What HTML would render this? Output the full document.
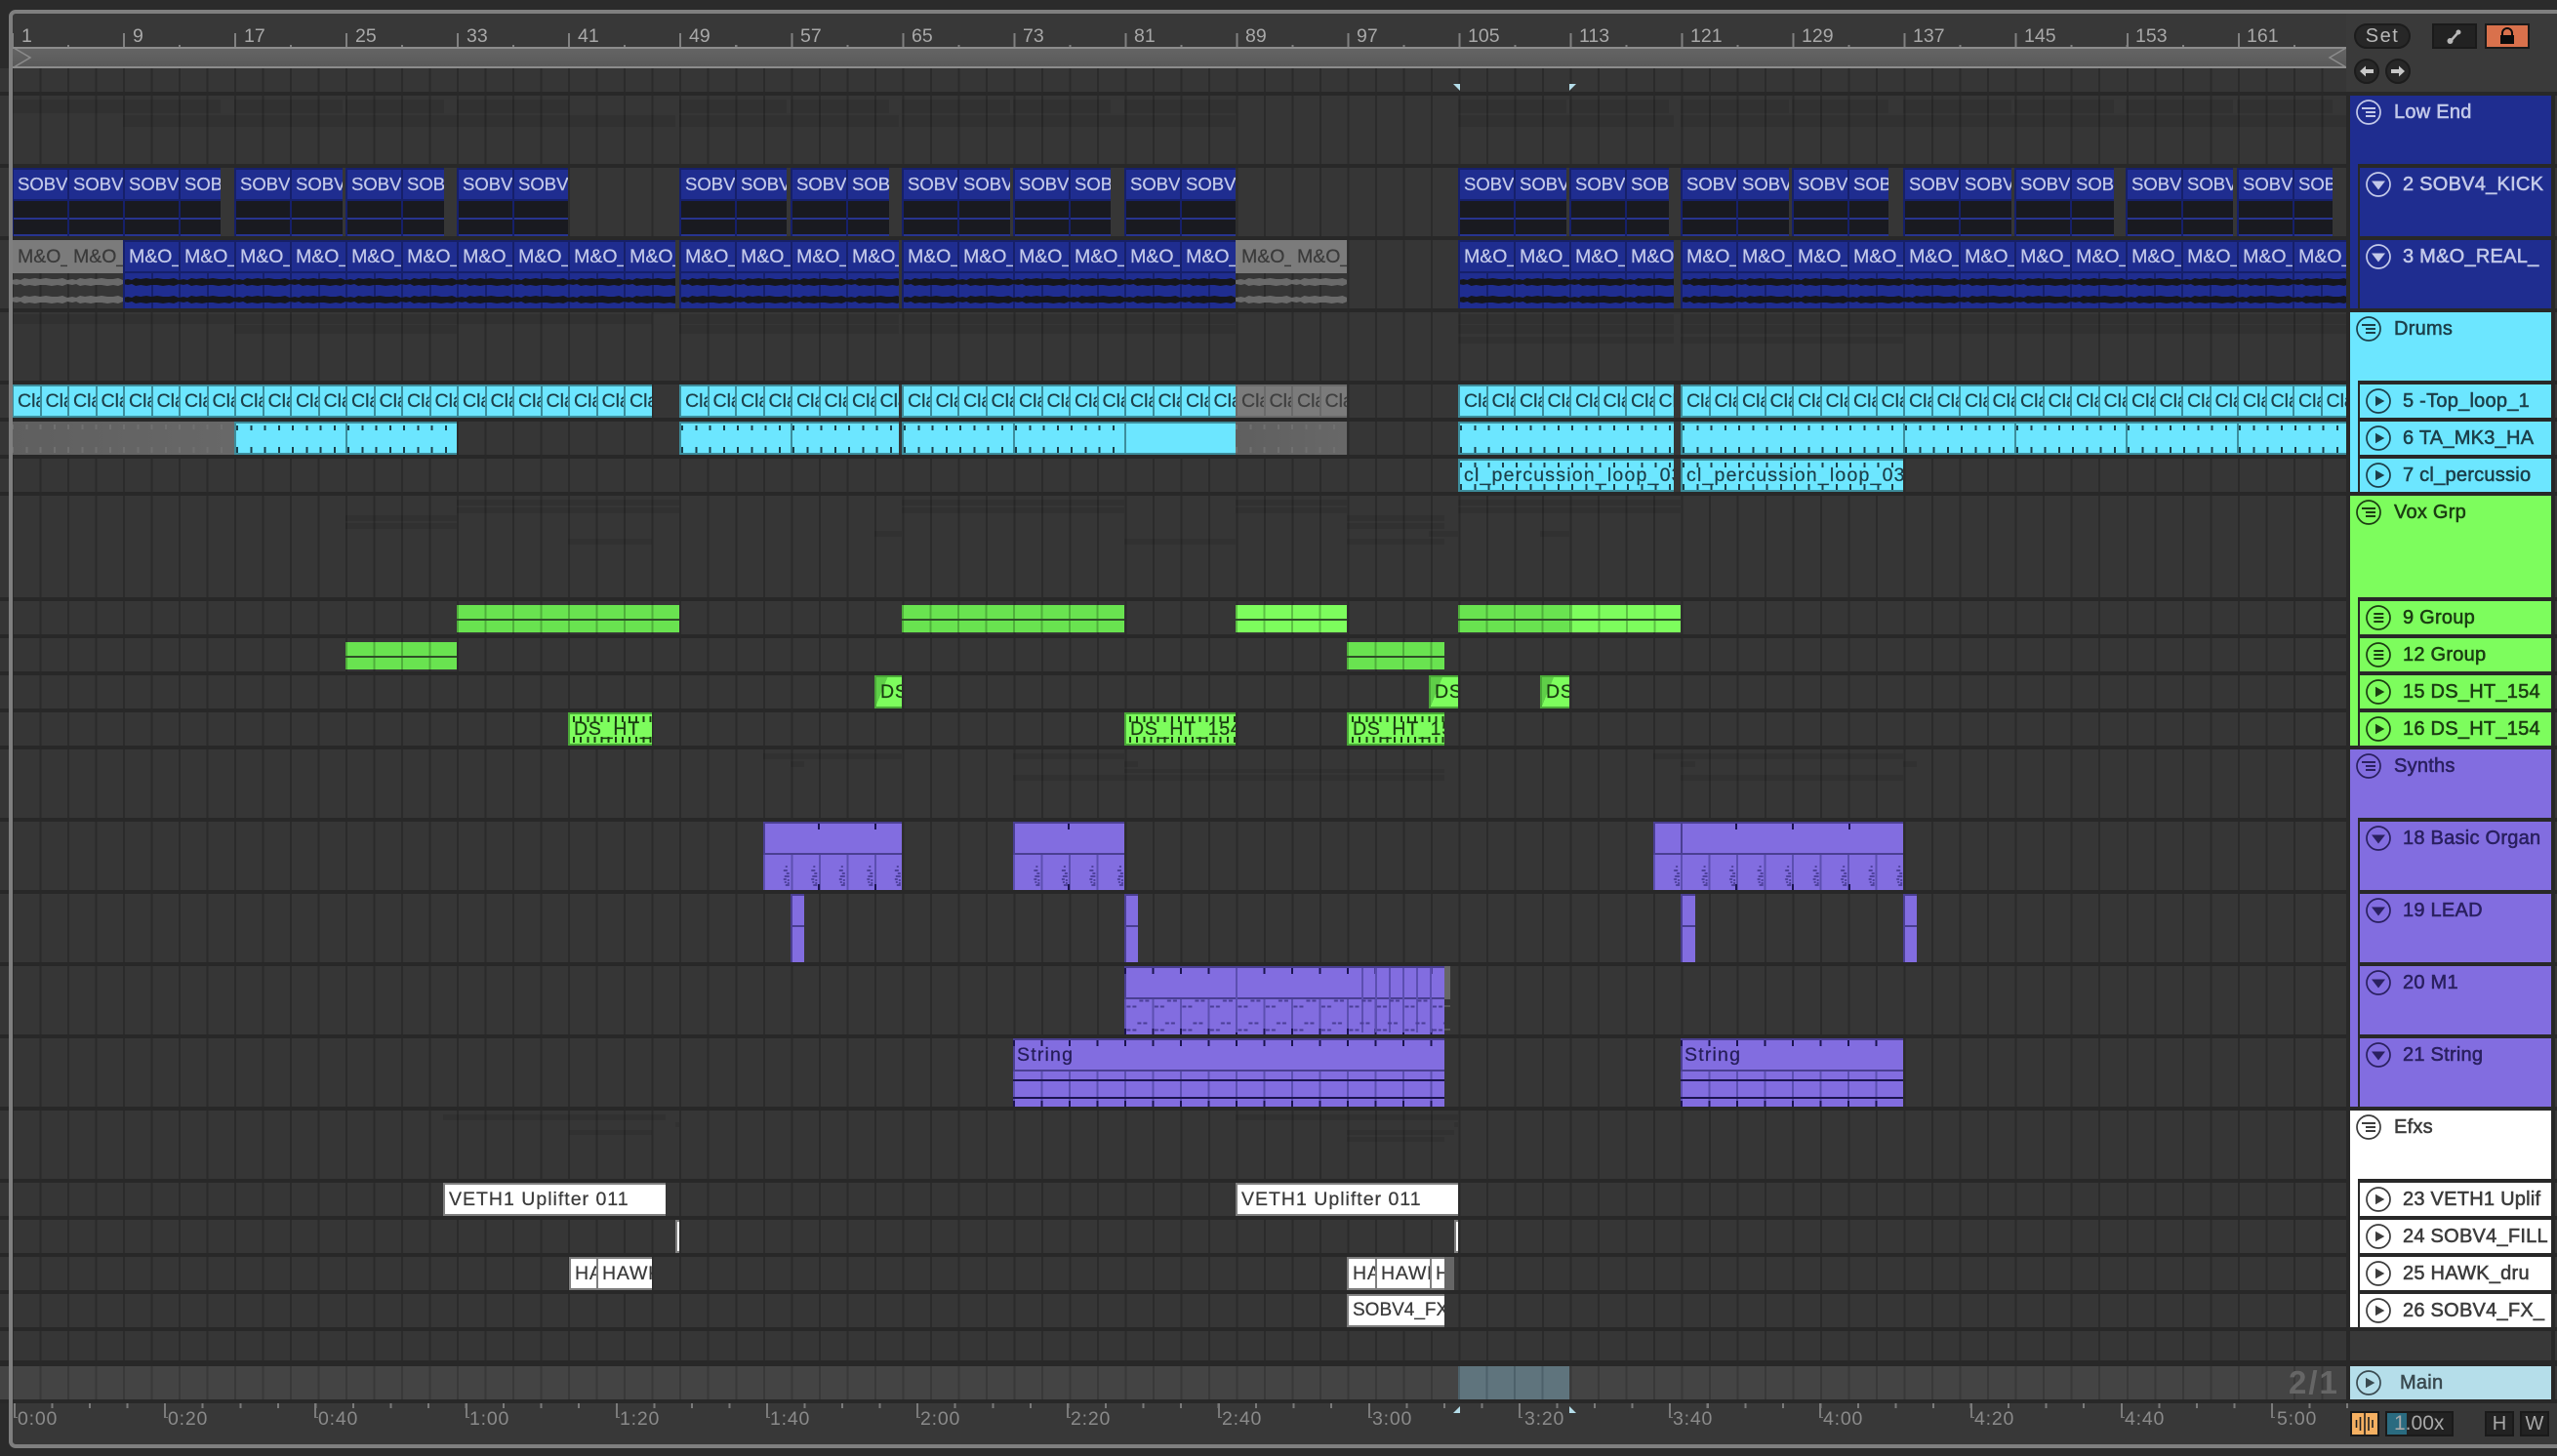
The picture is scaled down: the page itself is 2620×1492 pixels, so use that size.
<!DOCTYPE html>
<html><head><meta charset="utf-8"><title>Arrangement</title>
<style>
*{box-sizing:border-box}
html,body{margin:0;padding:0;width:2620px;height:1492px;overflow:hidden;background:#2b2b2b;font-family:"Liberation Sans",sans-serif}
.a{position:absolute}
.sep{position:absolute;left:0;width:2620px;background:#282828}
.r{position:absolute;left:0;width:2404px;overflow:hidden}
.k{position:absolute;top:0;height:100%;overflow:hidden;display:flex;font-size:19.5px;letter-spacing:.8px;white-space:nowrap;-webkit-text-stroke:.25px currentColor}
.k b{flex:none;font-weight:normal;position:relative;overflow:hidden;display:block}
.fr{position:absolute;left:0;width:2404px}
.fr u{position:absolute;top:0;height:100%;background:rgba(0,0,0,.085)}
.s{font-size:18.5px;letter-spacing:0}
.s b{width:57.02px;height:70px;padding-left:4px;line-height:34px;border-left:2px solid #16206a;color:#c3c9e9;background:linear-gradient(transparent 51px,#27348f 51px 53px,transparent 53px),linear-gradient(#16206a 0 2px,#1f2d90 2px 32px,#16206a 32px 34px,#191a20 34px 68px,#27348f 68px)}
.m{letter-spacing:0}
.m b{width:57.02px;height:70px;padding-left:4px;line-height:34px;border-left:2px solid #16206a;color:#c3c9e9;background:linear-gradient(#16206a 0 2px,#1f2d90 2px 32px,#16206a 32px 34px,#1f2d90 34px)}
.m b::after{content:"";position:absolute;left:26.5px;top:34px;width:2px;height:36px;background:#16206a}
.m.g b{border-left:0;padding-left:6px;color:#3a3a3a;background:linear-gradient(#7b7b7b 0 34px,transparent 34px)}
.m.g b::after{display:none}
.c5{letter-spacing:0}
.c5 b{width:28.51px;height:34px;line-height:30px;border:2px solid #3d8d9c;border-right:0;background:#6ce6ff;color:#1c3f4a;padding-left:4px}
.c5.g b{background:#7b7b7b;border-color:#6a6a6a;color:#3f3f3f}
.c6{border-top:2px solid #3d8d9c;border-bottom:2px solid #3d8d9c;background:repeating-linear-gradient(90deg,#1c3f4a 0 2px,transparent 2px 14.255px) 0 2px/100% 5px no-repeat,repeating-linear-gradient(90deg,#1c3f4a 0 2px,transparent 2px 14.255px) 0 24px/100% 6px no-repeat,#6ce6ff;color:#1c3f4a;line-height:30px;padding-left:4px;display:block;border-left:2px solid #3d8d9c;letter-spacing:1.2px}
.c6 u{position:absolute;top:-2px;height:34px;width:2px;background:#3d8d9c}
.c6g{position:absolute;top:0;height:100%;background:repeating-linear-gradient(90deg,#707070 0 2px,transparent 2px 14.255px) 0 3px/100% 5px no-repeat,repeating-linear-gradient(90deg,#707070 0 2px,transparent 2px 14.255px) 0 26px/100% 6px no-repeat,linear-gradient(90deg,#5f5f5f,#686868)}
.v{position:absolute;top:4px;height:28px;background:linear-gradient(transparent 14px,#2f4f28 14px 16px,transparent 16px),repeating-linear-gradient(90deg,rgba(30,80,20,.35) 0 2px,transparent 2px 28.51px),#69e350}
.v.l{background:linear-gradient(transparent 14px,#2f4f28 14px 16px,transparent 16px),repeating-linear-gradient(90deg,rgba(30,80,20,.35) 0 2px,transparent 2px 28.51px),#7dfd5d}
.d{border:2px solid #4aa838;border-right:0;background:linear-gradient(112deg,#5fcf48 0 30%,#7dfd5d 30%);color:#1b3d12;padding-left:4px;line-height:30px;display:block}
.t16{border:2px solid #4aa838;border-right:0;background:repeating-linear-gradient(90deg,#1b3d12 0 2px,transparent 2px 7.13px) 3px 2px/100% 6px no-repeat,repeating-linear-gradient(90deg,#1b3d12 0 2px,transparent 2px 7.13px) 3px 23px/100% 6px no-repeat,#7dfd5d;color:#1b3d12;padding-left:4px;line-height:30px;display:block}
.p{display:block;background-origin:border-box;color:#251d58;padding-left:4px;line-height:34px;letter-spacing:1.2px;background-color:#826de0;background-image:linear-gradient(#4a3f92 0 2px,transparent 2px 32px,#4a3f92 32px 34px,transparent 34px),linear-gradient(90deg,#4a3f92 0 2px,transparent 2px)}
.p18{background-image:repeating-linear-gradient(90deg,transparent 0 56px,#1c1550 56px 58px,transparent 58px 57.02px),repeating-linear-gradient(90deg,transparent 0 56px,#1c1550 56px 58px,transparent 58px 57.02px),repeating-linear-gradient(90deg,#5c4fb0 0 2px,transparent 2px 28.51px),linear-gradient(#4a3f92 0 2px,transparent 2px 32px,#4a3f92 32px 34px,transparent 34px),linear-gradient(90deg,#4a3f92 0 2px,transparent 2px);background-size:100% 6px,100% 6px,100% 36px,auto,auto;background-position:0 2px,0 64px,0 34px,0 0,0 0;background-repeat:no-repeat}
.p20{background-image:repeating-linear-gradient(90deg,#1c1550 0 2px,transparent 2px 28.51px),repeating-linear-gradient(90deg,#1c1550 0 2px,transparent 2px 28.51px),repeating-linear-gradient(90deg,#5c4fb0 0 2px,transparent 2px 28.51px),linear-gradient(#4a3f92 0 2px,transparent 2px 32px,#4a3f92 32px 34px,transparent 34px),linear-gradient(90deg,#4a3f92 0 2px,transparent 2px);background-size:100% 6px,100% 6px,100% 36px,auto,auto;background-position:0 2px,0 64px,0 34px,0 0,0 0;background-repeat:no-repeat}
.p21{background-image:linear-gradient(transparent 42px,#1c1550 42px 44px,transparent 44px 60px,#1c1550 60px 62px,transparent 62px),repeating-linear-gradient(90deg,#1c1550 0 2px,transparent 2px 28.51px),repeating-linear-gradient(90deg,#1c1550 0 2px,transparent 2px 28.51px),repeating-linear-gradient(90deg,#5c4fb0 0 2px,transparent 2px 28.51px),linear-gradient(#4a3f92 0 2px,transparent 2px 32px,#4a3f92 32px 34px,transparent 34px),linear-gradient(90deg,#4a3f92 0 2px,transparent 2px);background-size:auto,100% 6px,100% 6px,100% 36px,auto,auto;background-position:0 0,0 2px,0 64px,0 34px,0 0,0 0;background-repeat:no-repeat}
.p u{position:absolute;top:2px;height:66px;width:2px;background:#5c4fb0}
.w{background:#fff;border:2px solid #7f7f7f;border-right:0;color:#3a3a3a;padding-left:4px;line-height:30px;display:block}
.gp{position:absolute;left:2408px;width:206px}
.gp>span{position:absolute;left:45px;top:0;line-height:34px;font-size:20px;font-weight:normal;letter-spacing:.25px;-webkit-text-stroke:.55px currentColor;white-space:nowrap}
.gp>svg{position:absolute;left:4px;top:2px}
.t{position:absolute;left:10px;width:196px;overflow:hidden;box-shadow:none}
.t span{position:absolute;left:44px;top:0;line-height:34px;font-size:20px;font-weight:normal;letter-spacing:.25px;-webkit-text-stroke:.55px currentColor;white-space:nowrap}
.t svg{position:absolute;left:4px;top:2px}
.ln{position:absolute;left:8px;width:2px;background:#282828}
.hs{position:absolute;left:8px;width:198px;height:4px;background:#282828}
.rl{position:absolute;top:26px;font-size:19.5px;line-height:22px;color:#a8a8a8}
.tm{position:absolute;top:1442px;font-size:19.5px;line-height:24px;letter-spacing:.8px;color:#8a8a8a}
.tk{position:absolute;top:1438px;width:2px;height:15px;background:#7a7a7a}
.tk::after{content:"";position:absolute;left:0;bottom:0;width:4px;height:1px;background:#7a7a7a}
.btn{position:absolute;top:24px;height:26px;background:#222;border:2px solid #1a1a1a}
.btm{position:absolute;top:1446px;height:26px;background:#222;border:2px solid #1a1a1a;color:#a8a8a8;font-size:20px;line-height:22px;text-align:center}
</style></head>
<body>
<svg width="0" height="0" style="position:absolute"><defs>
<symbol id="ig" viewBox="0 0 30 30"><circle cx="15" cy="15" r="12" fill="none" stroke="currentColor" stroke-width="1.7"/><path d="M8 11H22M12 15H22M12 19H22" stroke="currentColor" stroke-width="2" fill="none"/></symbol>
<symbol id="ih" viewBox="0 0 30 30"><circle cx="15" cy="15" r="12" fill="none" stroke="currentColor" stroke-width="1.7"/><path d="M10.3 11H20.3M10.3 15H20.3M10.3 19H20.3" stroke="currentColor" stroke-width="2" fill="none"/></symbol>
<symbol id="id" viewBox="0 0 30 30"><circle cx="15" cy="15" r="12" fill="none" stroke="currentColor" stroke-width="1.7"/><path d="M8 11.5H22L15 20.5Z" fill="currentColor"/></symbol>
<symbol id="ip" viewBox="0 0 30 30"><circle cx="15" cy="15" r="12" fill="none" stroke="currentColor" stroke-width="1.7"/><path d="M12 9.8L21.3 15L12 20.2Z" fill="currentColor"/></symbol>
<pattern id="wb" width="57.02" height="36" patternUnits="userSpaceOnUse" x="12"><path d="M0 7L5 6 9 7 13 5 18 6 24 5 29 6 35 5 41 6 47 6 52 5 57 7V11L52 13 47 12 41 13 35 12 29 12 24 13 18 12 13 13 9 11 5 12 0 11ZM0 25L5 24 9 25 13 23 18 24 24 23 29 24 35 23 41 24 47 24 52 23 57 25V29L52 31 47 30 41 31 35 30 29 30 24 31 18 30 13 31 9 29 5 30 0 29Z" fill="#15161c"/></pattern>
<pattern id="wg" width="57.02" height="36" patternUnits="userSpaceOnUse" x="12"><path d="M0 7L5 6 9 7 13 5 18 6 24 5 29 6 35 5 41 6 47 6 52 5 57 7V11L52 13 47 12 41 13 35 12 29 12 24 13 18 12 13 13 9 11 5 12 0 11ZM0 25L5 24 9 25 13 23 18 24 24 23 29 24 35 23 41 24 47 24 52 23 57 25V29L52 31 47 30 41 31 35 30 29 30 24 31 18 30 13 31 9 29 5 30 0 29Z" fill="#6a6a6a"/></pattern>
<pattern id="pd" width="28.51" height="36" patternUnits="userSpaceOnUse" x="12"><path d="M23 11h2v2h-2zM21 15h4v2h-4zM24 18h3v2h-3zM22 21h5v2h-5zM21 24h3v2h-3zM25 25h2v2h-2zM22 27h2v2h-2zM25 28h2v2h-2zM23 30h4v2h-4z" fill="#4f429e"/></pattern>
<pattern id="pe" width="28.51" height="36" patternUnits="userSpaceOnUse" x="12"><path d="M2 7.5H13M15 1.5H27M13 24.5H25M2 31.5H13" stroke="#4a3d96" stroke-width="2" stroke-dasharray="4 2" fill="none"/></pattern>
</defs></svg>

<!-- window bg -->
<div class="a" style="left:13px;top:14px;width:2607px;height:1466px;background:#383838"></div>
<!-- grid -->
<div class="a" style="left:0;top:70px;width:2404px;height:1368px;background:repeating-linear-gradient(90deg,#2b2b2b 12px,#2b2b2b 14px,#363636 14px,#363636 40.51px)"></div>
<!-- Main row bg -->
<div class="a" style="left:0;top:1400px;width:2404px;height:34px;background:repeating-linear-gradient(90deg,#393939 12px,#393939 14px,#444 14px,#444 40.51px)"></div>
<div class="a" style="left:1494px;top:1400px;width:114px;height:34px;background:repeating-linear-gradient(90deg,#4d616a 0,#4d616a 2px,#5f747d 2px,#5f747d 28.51px)"></div>
<div class="a" style="left:2345px;top:1398px;font-size:33px;font-weight:bold;line-height:38px;letter-spacing:2px;color:#666">2/1</div>

<!-- separators -->
<div class="sep" style="top:94px;height:4px"></div><div class="sep" style="top:168px;height:4px"></div><div class="sep" style="top:242px;height:4px"></div><div class="sep" style="top:316px;height:4px"></div><div class="sep" style="top:390px;height:4px"></div><div class="sep" style="top:428px;height:4px"></div><div class="sep" style="top:466px;height:4px"></div><div class="sep" style="top:504px;height:4px"></div><div class="sep" style="top:612px;height:4px"></div><div class="sep" style="top:650px;height:4px"></div><div class="sep" style="top:688px;height:4px"></div><div class="sep" style="top:726px;height:4px"></div><div class="sep" style="top:764px;height:4px"></div><div class="sep" style="top:838px;height:4px"></div><div class="sep" style="top:912px;height:4px"></div><div class="sep" style="top:986px;height:4px"></div><div class="sep" style="top:1060px;height:4px"></div><div class="sep" style="top:1134px;height:4px"></div><div class="sep" style="top:1208px;height:4px"></div><div class="sep" style="top:1246px;height:4px"></div><div class="sep" style="top:1284px;height:4px"></div><div class="sep" style="top:1322px;height:4px"></div><div class="sep" style="top:1360px;height:4px"></div><div class="sep" style="top:1394px;height:6px"></div><div class="sep" style="top:1434px;height:4px"></div>

<!-- faint group previews -->
<div class="fr" style="top:102px;height:14px"><u style="left:12px;width:214px"></u><u style="left:240px;width:111px"></u><u style="left:354px;width:101px"></u><u style="left:468px;width:115px"></u><u style="left:696px;width:110px"></u><u style="left:810px;width:101px"></u><u style="left:924px;width:111px"></u><u style="left:1038px;width:100px"></u><u style="left:1152px;width:115px"></u><u style="left:1494px;width:111px"></u><u style="left:1608px;width:102px"></u><u style="left:1722px;width:111px"></u><u style="left:1836px;width:99px"></u><u style="left:1950px;width:111px"></u><u style="left:2064px;width:102px"></u><u style="left:2178px;width:110px"></u><u style="left:2292px;width:98px"></u></div>
<div class="fr" style="top:118px;height:12px"><u style="left:126px;width:566px"></u><u style="left:696px;width:225px"></u><u style="left:924px;width:342px"></u><u style="left:1494px;width:221px"></u><u style="left:1722px;width:682px"></u></div>
<div class="fr" style="top:322px;height:10px"><u style="left:12px;width:656px"></u><u style="left:696px;width:225px"></u><u style="left:924px;width:342px"></u><u style="left:1494px;width:221px"></u><u style="left:1722px;width:682px"></u></div>
<div class="fr" style="top:333px;height:9px"><u style="left:240px;width:228px"></u><u style="left:696px;width:225px"></u><u style="left:924px;width:342px"></u><u style="left:1494px;width:221px"></u><u style="left:1722px;width:682px"></u></div>
<div class="fr" style="top:345px;height:7px"><u style="left:1494px;width:221px"></u><u style="left:1722px;width:228px"></u></div>
<div class="fr" style="top:512px;height:6px"><u style="left:468px;width:228px"></u><u style="left:924px;width:228px"></u><u style="left:1266px;width:114px"></u><u style="left:1494px;width:228px"></u></div>
<div class="fr" style="top:520px;height:6px"><u style="left:468px;width:228px"></u><u style="left:924px;width:228px"></u><u style="left:1266px;width:114px"></u><u style="left:1494px;width:228px"></u></div>
<div class="fr" style="top:528px;height:6px"><u style="left:354px;width:114px"></u><u style="left:1380px;width:100px"></u></div>
<div class="fr" style="top:536px;height:6px"><u style="left:354px;width:114px"></u><u style="left:1380px;width:100px"></u></div>
<div class="fr" style="top:544px;height:6px"><u style="left:896px;width:28px"></u><u style="left:1464px;width:30px"></u><u style="left:1578px;width:30px"></u></div>
<div class="fr" style="top:552px;height:6px"><u style="left:582px;width:86px"></u><u style="left:1152px;width:114px"></u><u style="left:1380px;width:100px"></u></div>
<div class="fr" style="top:772px;height:6px"><u style="left:782px;width:142px"></u><u style="left:1038px;width:114px"></u><u style="left:1694px;width:256px"></u></div>
<div class="fr" style="top:780px;height:6px"><u style="left:810px;width:14px"></u><u style="left:1152px;width:14px"></u><u style="left:1722px;width:15px"></u><u style="left:1950px;width:14px"></u></div>
<div class="fr" style="top:788px;height:4px"><u style="left:1152px;width:328px"></u></div>
<div class="fr" style="top:794px;height:6px"><u style="left:1038px;width:442px"></u><u style="left:1722px;width:228px"></u></div>
<div class="fr" style="top:1142px;height:6px"><u style="left:454px;width:228px"></u><u style="left:1266px;width:228px"></u></div>
<div class="fr" style="top:1150px;height:5px"><u style="left:692px;width:4px"></u><u style="left:1490px;width:4px"></u></div>
<div class="fr" style="top:1158px;height:5px"><u style="left:583px;width:85px"></u><u style="left:1380px;width:110px"></u></div>
<div class="fr" style="top:1165px;height:5px"><u style="left:1380px;width:100px"></u></div>

<!-- row 2 SOBV -->
<div class="r" style="top:172px;height:70px">
<div class="k s" style="left:12px;width:214px"><b>SOBV</b><b>SOBV</b><b>SOBV</b><b>SOBV</b></div>
<div class="k s" style="left:240px;width:111px"><b>SOBV</b><b>SOBV</b></div>
<div class="k s" style="left:354px;width:101px"><b>SOBV</b><b>SOBV</b></div>
<div class="k s" style="left:468px;width:115px"><b>SOBV</b><b>SOBV</b></div>
<div class="k s" style="left:696px;width:110px"><b>SOBV</b><b>SOBV</b></div>
<div class="k s" style="left:810px;width:101px"><b>SOBV</b><b>SOBV</b></div>
<div class="k s" style="left:924px;width:111px"><b>SOBV</b><b>SOBV</b></div>
<div class="k s" style="left:1038px;width:100px"><b>SOBV</b><b>SOBV</b></div>
<div class="k s" style="left:1152px;width:115px"><b>SOBV</b><b>SOBV</b></div>
<div class="k s" style="left:1494px;width:111px"><b>SOBV</b><b>SOBV</b></div>
<div class="k s" style="left:1608px;width:102px"><b>SOBV</b><b>SOBV</b></div>
<div class="k s" style="left:1722px;width:111px"><b>SOBV</b><b>SOBV</b></div>
<div class="k s" style="left:1836px;width:99px"><b>SOBV</b><b>SOBV</b></div>
<div class="k s" style="left:1950px;width:111px"><b>SOBV</b><b>SOBV</b></div>
<div class="k s" style="left:2064px;width:102px"><b>SOBV</b><b>SOBV</b></div>
<div class="k s" style="left:2178px;width:110px"><b>SOBV</b><b>SOBV</b></div>
<div class="k s" style="left:2292px;width:98px"><b>SOBV</b><b>SOBV</b></div>
</div>

<!-- row 3 M&O -->
<div class="r" style="top:246px;height:70px">
<div class="k m g" style="left:12px;width:114px"><b>M&amp;O_</b><b>M&amp;O_</b></div>
<div class="k m" style="left:126px;width:566px"><b>M&amp;O_</b><b>M&amp;O_</b><b>M&amp;O_</b><b>M&amp;O_</b><b>M&amp;O_</b><b>M&amp;O_</b><b>M&amp;O_</b><b>M&amp;O_</b><b>M&amp;O_</b><b>M&amp;O_</b></div>
<div class="k m" style="left:696px;width:225px"><b>M&amp;O_</b><b>M&amp;O_</b><b>M&amp;O_</b><b>M&amp;O_</b></div>
<div class="k m" style="left:924px;width:342px"><b>M&amp;O_</b><b>M&amp;O_</b><b>M&amp;O_</b><b>M&amp;O_</b><b>M&amp;O_</b><b>M&amp;O_</b></div>
<div class="k m g" style="left:1266px;width:114px"><b>M&amp;O_</b><b>M&amp;O_</b></div>
<div class="k m" style="left:1494px;width:221px"><b>M&amp;O_</b><b>M&amp;O_</b><b>M&amp;O_</b><b>M&amp;O_</b></div>
<div class="k m" style="left:1722px;width:682px"><b>M&amp;O_</b><b>M&amp;O_</b><b>M&amp;O_</b><b>M&amp;O_</b><b>M&amp;O_</b><b>M&amp;O_</b><b>M&amp;O_</b><b>M&amp;O_</b><b>M&amp;O_</b><b>M&amp;O_</b><b>M&amp;O_</b><b>M&amp;O_</b></div>
<svg class="a" style="left:0;top:34px" width="2404" height="36">
<rect x="12" width="114" height="36" fill="url(#wg)"/><rect x="1266" width="114" height="36" fill="url(#wg)"/>
<rect x="128" width="564" height="36" fill="url(#wb)"/><rect x="698" width="223" height="36" fill="url(#wb)"/><rect x="926" width="340" height="36" fill="url(#wb)"/><rect x="1496" width="219" height="36" fill="url(#wb)"/><rect x="1724" width="680" height="36" fill="url(#wb)"/>
</svg>
</div>

<!-- row 5 Cla -->
<div class="r" style="top:394px;height:34px">
<div class="k c5" style="left:12px;width:656px"><b>Cla</b><b>Cla</b><b>Cla</b><b>Cla</b><b>Cla</b><b>Cla</b><b>Cla</b><b>Cla</b><b>Cla</b><b>Cla</b><b>Cla</b><b>Cla</b><b>Cla</b><b>Cla</b><b>Cla</b><b>Cla</b><b>Cla</b><b>Cla</b><b>Cla</b><b>Cla</b><b>Cla</b><b>Cla</b><b>Cla</b></div>
<div class="k c5" style="left:696px;width:225px"><b>Cla</b><b>Cla</b><b>Cla</b><b>Cla</b><b>Cla</b><b>Cla</b><b>Cla</b><b>Cla</b></div>
<div class="k c5" style="left:924px;width:342px"><b>Cla</b><b>Cla</b><b>Cla</b><b>Cla</b><b>Cla</b><b>Cla</b><b>Cla</b><b>Cla</b><b>Cla</b><b>Cla</b><b>Cla</b><b>Cla</b></div>
<div class="k c5 g" style="left:1266px;width:114px"><b>Cla</b><b>Cla</b><b>Cla</b><b>Cla</b></div>
<div class="k c5" style="left:1494px;width:221px"><b>Cla</b><b>Cla</b><b>Cla</b><b>Cla</b><b>Cla</b><b>Cla</b><b>Cla</b><b>Cla</b></div>
<div class="k c5" style="left:1722px;width:682px"><b>Cla</b><b>Cla</b><b>Cla</b><b>Cla</b><b>Cla</b><b>Cla</b><b>Cla</b><b>Cla</b><b>Cla</b><b>Cla</b><b>Cla</b><b>Cla</b><b>Cla</b><b>Cla</b><b>Cla</b><b>Cla</b><b>Cla</b><b>Cla</b><b>Cla</b><b>Cla</b><b>Cla</b><b>Cla</b><b>Cla</b><b>Cla</b></div>
</div>

<!-- row 6 -->
<div class="r" style="top:432px;height:34px">
<div class="c6g" style="left:12px;width:228px"></div>
<div class="k c6" style="left:240px;width:228px"><u style="left:112px"></u></div>
<div class="k c6" style="left:696px;width:225px"><u style="left:112px"></u></div>
<div class="k c6" style="left:924px;width:228px"><u style="left:112px"></u></div>
<div class="k c6" style="left:1152px;width:114px;background:#6ce6ff"></div>
<div class="c6g" style="left:1266px;width:114px"></div>
<div class="k c6" style="left:1494px;width:221px"></div>
<div class="k c6" style="left:1722px;width:682px"><u style="left:226px"></u><u style="left:340px"></u><u style="left:454px"></u><u style="left:568px"></u></div>
</div>

<!-- row 7 -->
<div class="r" style="top:470px;height:34px">
<div class="k c6" style="left:1494px;width:221px">cl_percussion_loop_03</div>
<div class="k c6" style="left:1722px;width:228px">cl_percussion_loop_03</div>
</div>

<!-- row 9 -->
<div class="r" style="top:616px;height:34px">
<div class="v" style="left:468px;width:228px"></div>
<div class="v" style="left:924px;width:228px"></div>
<div class="v l" style="left:1266px;width:114px"></div>
<div class="v" style="left:1494px;width:115px"></div>
<div class="v l" style="left:1609px;width:113px"></div>
</div>
<!-- row 12 -->
<div class="r" style="top:654px;height:34px">
<div class="v" style="left:354px;width:114px"></div>
<div class="v" style="left:1380px;width:100px"></div>
</div>
<!-- row 15 -->
<div class="r" style="top:692px;height:34px">
<div class="k d" style="left:896px;width:28px">DS</div>
<div class="k d" style="left:1464px;width:30px">DS</div>
<div class="k d" style="left:1578px;width:30px">DS</div>
</div>
<!-- row 16 -->
<div class="r" style="top:730px;height:34px">
<div class="k t16" style="left:582px;width:86px">DS_HT_154</div>
<div class="k t16" style="left:1152px;width:114px">DS_HT_154</div>
<div class="k t16" style="left:1380px;width:100px">DS_HT_154</div>
</div>

<!-- row 18 -->
<div class="r" style="top:842px;height:70px">
<div class="k p p18" style="left:782px;width:142px"></div>
<div class="k p p18" style="left:1038px;width:114px"></div>
<div class="k p p18" style="left:1694px;width:29px"></div>
<div class="k p p18" style="left:1722px;width:228px"></div>
<svg class="a" style="left:0;top:34px" width="2404" height="36"><rect x="782" width="142" height="36" fill="url(#pd)"/><rect x="1038" width="114" height="36" fill="url(#pd)"/><rect x="1694" width="256" height="36" fill="url(#pd)"/></svg>
</div>
<!-- row 19 -->
<div class="r" style="top:916px;height:70px">
<div class="k p" style="left:810px;width:14px"></div>
<div class="k p" style="left:1152px;width:14px"></div>
<div class="k p" style="left:1722px;width:15px"></div>
<div class="k p" style="left:1950px;width:14px"></div>
</div>
<!-- row 20 -->
<div class="r" style="top:990px;height:70px">
<div class="k p p20" style="left:1152px;width:328px"><u style="left:114px"></u><u style="left:243px"></u><u style="left:257px"></u><u style="left:271px"></u><u style="left:285px"></u><u style="left:299px"></u><u style="left:313px"></u></div>
<div class="a" style="left:1480px;top:0;width:6px;height:34px;background:#666"></div>
<div class="a" style="left:1480px;top:40px;width:6px;height:2px;background:#555"></div>
<div class="a" style="left:1480px;top:64px;width:6px;height:2px;background:#555"></div>
<svg class="a" style="left:0;top:34px" width="2404" height="36"><rect x="1152" width="328" height="36" fill="url(#pe)"/></svg>
</div>
<!-- row 21 -->
<div class="r" style="top:1064px;height:70px">
<div class="k p p21" style="left:1038px;width:442px">String</div>
<div class="k p p21" style="left:1722px;width:228px">String</div>
</div>

<!-- row 23 -->
<div class="r" style="top:1212px;height:34px">
<div class="k w" style="left:454px;width:228px;letter-spacing:1px">VETH1 Uplifter 011</div>
<div class="k w" style="left:1266px;width:228px;letter-spacing:1px">VETH1 Uplifter 011</div>
</div>
<!-- row 24 -->
<div class="r" style="top:1250px;height:34px">
<div class="k w" style="left:692px;width:4px;padding:0"></div>
<div class="k w" style="left:1490px;width:4px;padding:0"></div>
</div>
<!-- row 25 -->
<div class="r" style="top:1288px;height:34px">
<div class="k w" style="left:583px;width:28px">HAWK</div>
<div class="k w" style="left:611px;width:57px">HAWK</div>
<div class="k w" style="left:1380px;width:29px">HAWK</div>
<div class="k w" style="left:1409px;width:56px">HAWK</div>
<div class="k w" style="left:1465px;width:15px">HAWK</div>
<div class="a" style="left:1480px;top:0;width:10px;height:34px;background:#666"></div>
</div>
<!-- row 26 -->
<div class="r" style="top:1326px;height:34px">
<div class="k w" style="left:1380px;width:100px;font-size:19px;letter-spacing:0">SOBV4_FX_</div>
</div>

<!-- vertical separators -->
<div class="a" style="left:2404px;top:70px;width:4px;height:1368px;background:#282828"></div>
<div class="a" style="left:2614px;top:94px;width:4px;height:1344px;background:#282828"></div>
<div class="a" style="left:2408px;top:1364px;width:206px;height:30px;background:#383838"></div>

<!-- Track headers -->
<div class="gp" style="top:98px;height:218px;background:#1f2d90;color:#c3c9e9">
<svg width="30" height="30"><use href="#ig"/></svg><span>Low End</span>
<div class="ln" style="top:70px;height:148px"></div>
<div class="hs" style="top:70px"></div><div class="hs" style="top:144px"></div>
<div class="t" style="top:74px;height:70px"><svg width="30" height="30"><use href="#id"/></svg><span>2 SOBV4_KICK</span></div>
<div class="t" style="top:148px;height:70px"><svg width="30" height="30"><use href="#id"/></svg><span>3 M&amp;O_REAL_</span></div>
</div>

<div class="gp" style="top:320px;height:184px;background:#6ce6ff;color:#1c3f4a">
<svg width="30" height="30"><use href="#ig"/></svg><span>Drums</span>
<div class="ln" style="top:70px;height:114px"></div>
<div class="hs" style="top:70px"></div><div class="hs" style="top:108px"></div><div class="hs" style="top:146px"></div>
<div class="t" style="top:74px;height:34px"><svg width="30" height="30"><use href="#ip"/></svg><span>5 -Top_loop_1</span></div>
<div class="t" style="top:112px;height:34px"><svg width="30" height="30"><use href="#ip"/></svg><span>6 TA_MK3_HA</span></div>
<div class="t" style="top:150px;height:34px"><svg width="30" height="30"><use href="#ip"/></svg><span>7 cl_percussio</span></div>
</div>

<div class="gp" style="top:508px;height:256px;background:#7dfd5d;color:#1b3d12">
<svg width="30" height="30"><use href="#ig"/></svg><span>Vox Grp</span>
<div class="ln" style="top:104px;height:152px"></div>
<div class="hs" style="top:104px"></div><div class="hs" style="top:142px"></div><div class="hs" style="top:180px"></div><div class="hs" style="top:218px"></div>
<div class="t" style="top:108px;height:34px"><svg width="30" height="30"><use href="#ih"/></svg><span>9 Group</span></div>
<div class="t" style="top:146px;height:34px"><svg width="30" height="30"><use href="#ih"/></svg><span>12 Group</span></div>
<div class="t" style="top:184px;height:34px"><svg width="30" height="30"><use href="#ip"/></svg><span>15 DS_HT_154</span></div>
<div class="t" style="top:222px;height:34px"><svg width="30" height="30"><use href="#ip"/></svg><span>16 DS_HT_154</span></div>
</div>

<div class="gp" style="top:768px;height:366px;background:#826de0;color:#2a2060">
<svg width="30" height="30"><use href="#ig"/></svg><span>Synths</span>
<div class="ln" style="top:70px;height:296px"></div>
<div class="hs" style="top:70px"></div><div class="hs" style="top:144px"></div><div class="hs" style="top:218px"></div><div class="hs" style="top:292px"></div>
<div class="t" style="top:74px;height:70px"><svg width="30" height="30"><use href="#id"/></svg><span>18 Basic Organ</span></div>
<div class="t" style="top:148px;height:70px"><svg width="30" height="30"><use href="#id"/></svg><span>19 LEAD</span></div>
<div class="t" style="top:222px;height:70px"><svg width="30" height="30"><use href="#id"/></svg><span>20 M1</span></div>
<div class="t" style="top:296px;height:70px"><svg width="30" height="30"><use href="#id"/></svg><span>21 String</span></div>
</div>

<div class="gp" style="top:1138px;height:222px;background:#fff;color:#3c3c3c">
<svg width="30" height="30"><use href="#ig"/></svg><span>Efxs</span>
<div class="ln" style="top:70px;height:152px"></div>
<div class="hs" style="top:70px"></div><div class="hs" style="top:108px"></div><div class="hs" style="top:146px"></div><div class="hs" style="top:184px"></div>
<div class="t" style="top:74px;height:34px"><svg width="30" height="30"><use href="#ip"/></svg><span>23 VETH1 Uplif</span></div>
<div class="t" style="top:112px;height:34px"><svg width="30" height="30"><use href="#ip"/></svg><span>24 SOBV4_FILL</span></div>
<div class="t" style="top:150px;height:34px"><svg width="30" height="30"><use href="#ip"/></svg><span>25 HAWK_dru</span></div>
<div class="t" style="top:188px;height:34px"><svg width="30" height="30"><use href="#ip"/></svg><span>26 SOBV4_FX_</span></div>
</div>

<div class="gp" style="top:1400px;height:34px;background:#b5deea;color:#3a4a50">
<svg width="30" height="30"><use href="#ip"/></svg><span style="left:51px">Main</span>
</div>

<!-- top ruler -->
<div class="a" style="left:0;top:34px;width:2406px;height:14px;background:repeating-linear-gradient(90deg,#808080 12px,#808080 14px,transparent 14px,transparent 126.04px)"></div>
<div class="a" style="left:0;top:46px;width:2404px;height:2px;background:repeating-linear-gradient(90deg,#808080 69px,#808080 71px,transparent 71px,transparent 126.02px)"></div>
<div class="a" style="left:0;top:46px;width:2404px;height:2px;background:repeating-linear-gradient(90deg,#808080 12px,#808080 14px,transparent 14px,transparent 69.02px)"></div>
<div class="rl" style="left:22px">1</div><div class="rl" style="left:136px">9</div><div class="rl" style="left:250px">17</div><div class="rl" style="left:364px">25</div><div class="rl" style="left:478px">33</div><div class="rl" style="left:592px">41</div><div class="rl" style="left:706px">49</div><div class="rl" style="left:820px">57</div><div class="rl" style="left:934px">65</div><div class="rl" style="left:1048px">73</div><div class="rl" style="left:1162px">81</div><div class="rl" style="left:1276px">89</div><div class="rl" style="left:1390px">97</div><div class="rl" style="left:1504px">105</div><div class="rl" style="left:1618px">113</div><div class="rl" style="left:1732px">121</div><div class="rl" style="left:1846px">129</div><div class="rl" style="left:1960px">137</div><div class="rl" style="left:2074px">145</div><div class="rl" style="left:2188px">153</div><div class="rl" style="left:2302px">161</div>
<div class="a" style="left:2404px;top:36px;width:2px;height:12px;background:#808080"></div>
<!-- loop bar -->
<div class="a" style="left:13px;top:48px;width:2391px;height:22px;border-top:2px solid #8c8c8c;border-bottom:2px solid #8c8c8c;background:linear-gradient(#646464,#5a5a5a)"></div>
<svg class="a" style="left:13px;top:48px" width="20" height="22"><path d="M1 1L18 11L1 21" fill="none" stroke="#8c8c8c" stroke-width="1.5"/></svg>
<svg class="a" style="left:2385px;top:48px" width="20" height="22"><path d="M19 1L2 11L19 21" fill="none" stroke="#8c8c8c" stroke-width="1.5"/></svg>
<!-- markers -->
<svg class="a" style="left:1489px;top:86px" width="7" height="7"><path d="M0 0H7V7Z" fill="#b5deea"/></svg>
<svg class="a" style="left:1608px;top:86px" width="7" height="7"><path d="M0 0H7L0 7Z" fill="#b5deea"/></svg>
<svg class="a" style="left:1489px;top:1441px" width="7" height="7"><path d="M7 0V7H0Z" fill="#b5deea"/></svg>
<svg class="a" style="left:1608px;top:1441px" width="7" height="7"><path d="M0 0V7H7Z" fill="#b5deea"/></svg>

<!-- top right panel -->
<div class="a" style="left:2404px;top:14px;width:216px;height:80px;background:#3a3a3a"></div>
<div class="a" style="left:2412px;top:24px;width:58px;height:26px;border-radius:13px;background:#272727;border:2px solid #1c1c1c;color:#b8b8b8;font-size:20px;line-height:22px;text-align:center;letter-spacing:1.5px">Set</div>
<div class="btn" style="left:2492px;width:46px"><svg class="a" style="left:0;top:0" width="42" height="22"><path d="M17 16L25 7" stroke="#b8b8b8" stroke-width="2.5"/><circle cx="16.5" cy="16" r="3" fill="#b8b8b8"/><circle cx="25" cy="7" r="2.5" fill="#b8b8b8"/></svg></div>
<div class="btn" style="left:2546px;width:46px;background:#d9714c"><svg class="a" style="left:0;top:0" width="42" height="22"><path d="M16 11V8a5 5 0 0 1 10 0v3" fill="none" stroke="#0c0c0c" stroke-width="2"/><rect x="14" y="10" width="14" height="9" fill="#0c0c0c"/></svg></div>
<div class="a" style="left:2412px;top:60px;width:26px;height:26px;border-radius:50%;background:#272727;border:2px solid #1c1c1c"><svg class="a" style="left:0;top:0" width="22" height="22"><path d="M4 11L10 5.5V9H18V13H10V16.5Z" fill="#c8c8c8"/></svg></div>
<div class="a" style="left:2444px;top:60px;width:26px;height:26px;border-radius:50%;background:#272727;border:2px solid #1c1c1c"><svg class="a" style="left:0;top:0" width="22" height="22"><path d="M18 11L12 5.5V9H4V13H12V16.5Z" fill="#c8c8c8"/></svg></div>

<!-- time ruler -->
<div class="a" style="left:14px;top:1438px;width:2392px;height:5px;background:repeating-linear-gradient(90deg,#7a7a7a 0,#7a7a7a 2px,transparent 2px,transparent 38.55px)"></div>
<div class="tk" style="left:14px"></div><div class="tk" style="left:168px"></div><div class="tk" style="left:322px"></div><div class="tk" style="left:477px"></div><div class="tk" style="left:631px"></div><div class="tk" style="left:785px"></div><div class="tk" style="left:939px"></div><div class="tk" style="left:1093px"></div><div class="tk" style="left:1248px"></div><div class="tk" style="left:1402px"></div><div class="tk" style="left:1556px"></div><div class="tk" style="left:1710px"></div><div class="tk" style="left:1864px"></div><div class="tk" style="left:2019px"></div><div class="tk" style="left:2173px"></div><div class="tk" style="left:2327px"></div>
<div class="tm" style="left:18px">0:00</div><div class="tm" style="left:172px">0:20</div><div class="tm" style="left:326px">0:40</div><div class="tm" style="left:481px">1:00</div><div class="tm" style="left:635px">1:20</div><div class="tm" style="left:789px">1:40</div><div class="tm" style="left:943px">2:00</div><div class="tm" style="left:1097px">2:20</div><div class="tm" style="left:1252px">2:40</div><div class="tm" style="left:1406px">3:00</div><div class="tm" style="left:1562px">3:20</div><div class="tm" style="left:1714px">3:40</div><div class="tm" style="left:1868px">4:00</div><div class="tm" style="left:2023px">4:20</div><div class="tm" style="left:2177px">4:40</div><div class="tm" style="left:2333px">5:00</div>

<!-- bottom right -->
<div class="btm" style="left:2408px;width:30px;background:#f5b062"><svg class="a" style="left:0;top:0" width="26" height="22"><path d="M4.5 7V15M8.5 4V18M13 0V22M17 4V18M21 7V15" stroke="#222" stroke-width="1.6"/></svg></div>
<div class="btm" style="left:2444px;width:70px;text-align:left;padding-left:7px;font-size:21px"><span class="a" style="left:0;top:0;width:20px;height:22px;background:#2a6b80"></span><span style="position:relative">1.00x</span></div>
<div class="btm" style="left:2546px;width:30px">H</div>
<div class="btm" style="left:2582px;width:30px">W</div>

<!-- window border -->
<div class="a" style="left:9px;top:10px;width:2700px;height:1474px;border:4px solid #7f7f7f;border-radius:7px;pointer-events:none"></div>
</body></html>
